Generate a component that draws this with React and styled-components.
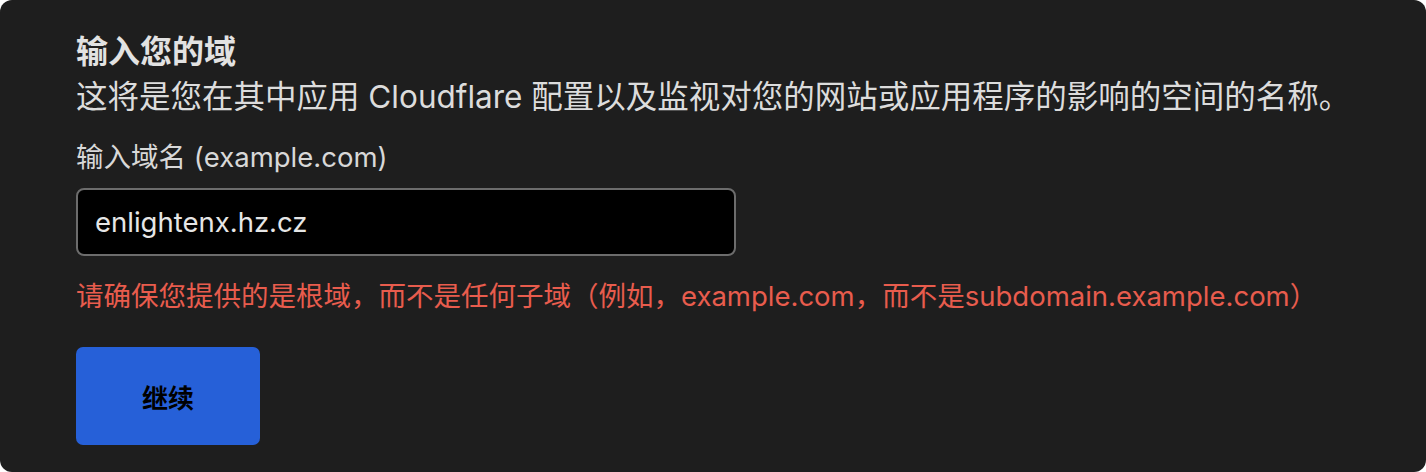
import React from 'react'
import styled, { createGlobalStyle } from 'styled-components'

const GlobalStyle = createGlobalStyle`
  html, body {
    margin: 0;
    padding: 0;
    background: #ffffff;
  }
  body {
    font-family: Inter, "Noto Sans CJK SC", sans-serif;
  }
`

const Panel = styled.section`
  box-sizing: border-box;
  width: 1426px;
  height: 472px;
  padding: 30px 76px 0;
  background: #1e1e1e;
  border-radius: 12px;
  display: flex;
  flex-direction: column;
  align-items: flex-start;
`

const Title = styled.h2`
  margin: 0;
  font-size: 32px;
  line-height: 44px;
  font-weight: 700;
  color: #e2e2e2;
`

const Lead = styled.p`
  margin: 0;
  font-size: 31.5px;
  line-height: 46px;
  font-weight: 400;
  color: #dcdcdc;
  white-space: nowrap;
`

const Label = styled.label`
  margin-top: 19px;
  font-size: 27.5px;
  line-height: 36px;
  color: #d8d8d8;
`

const Field = styled.input`
  box-sizing: border-box;
  margin-top: 13px;
  width: 660px;
  height: 68px;
  padding: 0 17px;
  background: #000;
  border: 2px solid #6c6c6c;
  border-radius: 8px;
  color: #e6e6e6;
  font-family: Inter, "Noto Sans CJK SC", sans-serif;
  font-size: 27.5px;
  outline: none;
`

const Hint = styled.p`
  margin: 22px 0 0;
  font-size: 27.5px;
  line-height: 36px;
  white-space: nowrap;
  color: ${({ tone }) => (tone === 'error' ? '#e85c4d' : '#d8d8d8')};
`

const Button = styled.button`
  margin-top: 33px;
  width: 184px;
  height: 98px;
  border: none;
  border-radius: 7px;
  background: #2660d8;
  color: #000;
  font-family: Inter, "Noto Sans CJK SC", sans-serif;
  font-size: 26px;
  font-weight: 700;
  cursor: pointer;
`

export default function App() {
  return (
    <>
      <GlobalStyle />
      <Panel>
        <Title>输入您的域</Title>
        <Lead>这将是您在其中应用 Cloudflare 配置以及监视对您的网站或应用程序的影响的空间的名称。</Lead>
        <Label htmlFor="domain">输入域名 (example.com)</Label>
        <Field id="domain" defaultValue="enlightenx.hz.cz" />
        <Hint tone="error">请确保您提供的是根域，而不是任何子域（例如，example.com，而不是subdomain.example.com）</Hint>
        <Button type="button">继续</Button>
      </Panel>
    </>
  )
}
